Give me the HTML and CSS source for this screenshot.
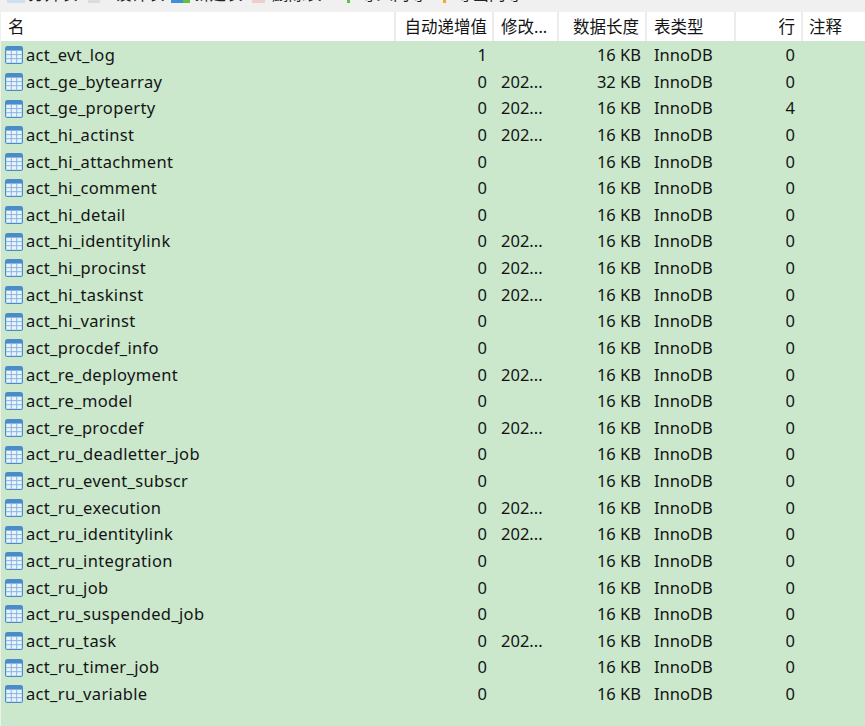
FILE: index.html
```html
<!DOCTYPE html>
<html lang="zh">
<head>
<meta charset="utf-8">
<title>Tables</title>
<link rel="stylesheet" href="styles.css">
</head>
<body>
<svg class="defs" width="0" height="0" aria-hidden="true">
  <symbol id="tbl" viewBox="0 0 18 18">
    <rect x="0" y="0" width="18" height="18" rx="2.5" fill="#4a8cc9"/>
    <rect x="1.2" y="4.6" width="15.6" height="12.2" fill="#eaf3fc"/>
    <path d="M6.3 4.6v12.2M11.7 4.6v12.2M1.2 8.6h15.6M1.2 12.7h15.6" stroke="#86b6e2" stroke-width="1" fill="none"/>
  </symbol>
</svg>
<div class="toolbar">
  <div class="strip">
    <span class="tool t1"><i class="ic ic-a"></i>打开表</span>
    <span class="tool t2"><i class="ic ic-b"></i>设计表</span>
    <span class="tool t3"><i class="ic ic-c"></i><i class="ic ic-d"></i>新建表</span>
    <span class="tool t4"><i class="ic ic-e"></i>删除表</span>
    <span class="tool t5"><i class="ic ic-f"></i>导入向导</span>
    <span class="tool t6"><i class="ic ic-g"></i>导出向导</span>
  </div>
</div>
<div class="table" id="t">
  <div class="row head">
    <div class="cell c-name">名</div>
    <div class="cell c-auto r">自动递增值</div>
    <div class="cell c-mod">修改...</div>
    <div class="cell c-size r">数据长度</div>
    <div class="cell c-type">表类型</div>
    <div class="cell c-rows r">行</div>
    <div class="cell c-note">注释</div>
  </div>
  <div class="body" id="rows"></div>
</div>
<script src="app.js"></script>
</body>
</html>
```
FILE: styles.css
```css
* { box-sizing: border-box; }
html, body { margin: 0; height: 726px; overflow: hidden; }
body {
  background: #f0f0f0;
  font-family: "Noto Sans", "Noto Sans CJK SC", sans-serif;
  font-size: 16.5px;
  color: #141414;
  display: flex;
  flex-direction: column;
}
.defs { position: absolute; }
.toolbar { height: 12px; flex: none; }
.strip {
  height: 3px;
  display: flex;
  align-items: flex-start;
  overflow: hidden;
  padding-left: 7px;
  color: #222;
}
.tool {
  display: flex;
  align-items: center;
  flex: none;
  margin-top: -16px;
  height: 20px;
  line-height: 20px;
  white-space: nowrap;
}
.t1 { width: 81px; }
.t2 { width: 83px; }
.t3 { width: 81px; }
.t4 { width: 95px; }
.t5 { width: 96px; }
.ic { flex: none; display: block; height: 20px; width: 18px; margin-right: 3px; background: #cfe0f0; }
.ic-b { width: 12px; margin-right: 15px; background: #dcdcdc; }
.ic-c { background: #3f8fd6; width: 12px; margin-right: 0; }
.ic-d { background: #5cc43c; width: 7px; margin-right: 3px; }
.ic-e { background: #f0cccc; width: 13px; margin-right: 7px; }
.ic-f { background: #5cc43c; width: 3px; margin: 0 10px 0 0; }
.ic-g { background: #f7a52e; width: 3px; margin: 0 10px 0 0; }
.table {
  flex: 1;
  margin-left: 1px;
  display: flex;
  flex-direction: column;
  min-height: 0;
}
.row { display: flex; }
.head { height: 29px; flex: none; background: #fff; }
.head .cell { border-right: 2px solid #ececec; height: 29px; line-height: 30px; }
.head .c-note { border-right: 0; }
.body { flex: 1; background: #cbe8cd; padding-top: 1px; }
.body .row { height: 26.625px; line-height: 26.625px; }
.cell { padding: 0 7px; white-space: nowrap; overflow: hidden; flex: none; }
.r { text-align: right; }
.c-name { width: 395px; display: flex; align-items: center; gap: 3px; padding-left: 4px; }
.body .c-name { letter-spacing: 0.33px; }
.head .c-name { padding-left: 7px; }
.c-auto { width: 98px; padding-right: 5px; }
.body .c-auto { padding-right: 7px; }
.c-mod { width: 65px; }
.c-size { width: 88px; padding-right: 6px; }
.c-type { width: 89px; }
.c-rows { width: 67px; padding-right: 6px; }
.body .c-rows { padding-right: 8px; }
.c-note { width: 62px; padding-left: 6px; }
.icon { width: 18px; height: 18px; flex: none; }
```
FILE: app.js
```js
var d = [["act_evt_log",1,0,16,0],["act_ge_bytearray",0,1,32,0],["act_ge_property",0,1,16,4],["act_hi_actinst",0,1,16,0],["act_hi_attachment",0,0,16,0],["act_hi_comment",0,0,16,0],["act_hi_detail",0,0,16,0],["act_hi_identitylink",0,1,16,0],["act_hi_procinst",0,1,16,0],["act_hi_taskinst",0,1,16,0],["act_hi_varinst",0,0,16,0],["act_procdef_info",0,0,16,0],["act_re_deployment",0,1,16,0],["act_re_model",0,0,16,0],["act_re_procdef",0,1,16,0],["act_ru_deadletter_job",0,0,16,0],["act_ru_event_subscr",0,0,16,0],["act_ru_execution",0,1,16,0],["act_ru_identitylink",0,1,16,0],["act_ru_integration",0,0,16,0],["act_ru_job",0,0,16,0],["act_ru_suspended_job",0,0,16,0],["act_ru_task",0,1,16,0],["act_ru_timer_job",0,0,16,0],["act_ru_variable",0,0,16,0]];
document.getElementById("rows").innerHTML = d.map(function (r) {
  return '<div class="row"><div class="cell c-name"><svg class="icon"><use href="#tbl"/></svg>' + r[0] + '</div>' +
    '<div class="cell c-auto r">' + r[1] + '</div>' +
    '<div class="cell c-mod">' + (r[2] ? '202...' : '') + '</div>' +
    '<div class="cell c-size r">' + r[3] + ' KB</div>' +
    '<div class="cell c-type">InnoDB</div>' +
    '<div class="cell c-rows r">' + r[4] + '</div>' +
    '<div class="cell c-note"></div></div>';
}).join("");
```
